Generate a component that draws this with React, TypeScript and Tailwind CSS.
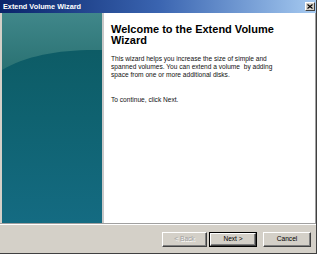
import React from 'react';

const font = "font-['Liberation_Sans',Arial,sans-serif]";

interface ButtonProps {
    label: string;
    width: string;
    disabled?: boolean;
    isDefault?: boolean;
}

const ClassicButton: React.FC<ButtonProps> = ({ label, width, disabled, isDefault }) => (
    <div className={`${width} h-[15px] ${isDefault ? 'border border-black' : ''} box-border`}>
        <div
            className={`w-full h-full bg-[#d4d0c8] border border-t-white border-l-white border-r-[#404040] border-b-[#404040] shadow-[inset_-1px_-1px_0_#808080] flex items-center justify-center text-[6.6px] leading-none ${
                disabled ? 'text-[#a0a0a0] [text-shadow:1px_1px_0_#fff]' : 'text-black'
            }`}
        >
            {label}
        </div>
    </div>
);

const WizardBanner: React.FC = () => (
    <div className="relative w-[100px] h-full bg-gradient-to-b from-[#0c5860] via-[#0f6270] to-[#146b82] overflow-hidden">
        <svg className="absolute inset-0 w-full h-full" viewBox="0 0 100 210" preserveAspectRatio="none">
            <defs>
                <linearGradient id="hl" x1="0" y1="0" x2="0" y2="1">
                    <stop offset="0" stopColor="#40878a" />
                    <stop offset="1" stopColor="#2a7273" />
                </linearGradient>
            </defs>
            <path d="M0 0 H100 V37 C60 36 25 42 0 57 Z" fill="url(#hl)" />
        </svg>
    </div>
);

export default function App() {
    return (
        <div className={`w-[320px] h-[255px] bg-white overflow-hidden ${font}`}>
            <div className="w-[317px] h-[254px] flex flex-col bg-[#d4d0c8] border-r border-b border-[#404040]">
                {/* title bar */}
                <div className="h-[13px] shrink-0 flex items-center justify-between bg-gradient-to-r from-[#0a246a] via-[#3a64b0] to-[#a6caf0] pl-[3px] pr-[1px]">
                    <span className="text-white font-bold text-[7.3px] leading-none">Extend Volume Wizard</span>
                    <div className="w-[10px] h-[9px] bg-[#d4d0c8] border border-t-white border-l-white border-r-[#404040] border-b-[#404040] flex items-center justify-center">
                        <svg width="6" height="5" viewBox="0 0 6 5">
                            <path d="M0.5 0.5 L5.5 4.5 M5.5 0.5 L0.5 4.5" stroke="#000" strokeWidth="1.1" />
                        </svg>
                    </div>
                </div>

                {/* body */}
                <div className="h-[210px] shrink-0 flex pl-[2px] border-r border-[#a0a0a0]">
                    <WizardBanner />
                    <div className="w-[2px] bg-[#c8c8c8]" />
                    <div className="flex-1 bg-white pl-[7px] pt-[11px]">
                        <h1 className="text-[11px] leading-[10.5px] font-bold text-black max-w-[180px]">
                            Welcome to the Extend Volume Wizard
                        </h1>
                        <p className="mt-[9.6px] text-[6.6px] leading-[8.3px] text-[#111]">
                            This wizard helps you increase the size of simple and
                            <br />
                            spanned volumes. You can extend a volume{'\u00a0'} by adding
                            <br />
                            space from one or more additional disks.
                        </p>
                        <p className="mt-[16.4px] text-[6.6px] leading-[8.3px] text-[#111]">To continue, click Next.</p>
                    </div>
                </div>

                {/* separator */}
                <div className="h-[2px] shrink-0 border-t border-[#a0a0a0] border-b border-b-white" />

                {/* buttons */}
                <div className="flex-1 flex items-start justify-end pt-[7px] pr-[5px]">
                    <ClassicButton label="< Back" width="w-[45px]" disabled />
                    <div className="w-[2px]" />
                    <ClassicButton label="Next >" width="w-[48px]" isDefault />
                    <div className="w-[6px]" />
                    <ClassicButton label="Cancel" width="w-[48px]" />
                </div>
            </div>
        </div>
    );
}
